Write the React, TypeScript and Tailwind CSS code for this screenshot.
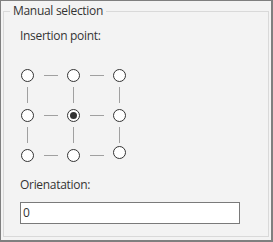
import React from "react"

const font = { fontFamily: '"Segoe UI", "Open Sans", "Noto Sans", sans-serif' }

function Radio({ checked = false, className = "" }: { checked?: boolean; className?: string }) {
  return (
    <div className={"flex h-[13px] w-[13px] items-center justify-center rounded-full border border-[#333333] bg-white " + className}>
      {checked && <div className="h-[7px] w-[7px] rounded-full bg-[#333333]" />}
    </div>
  )
}

const HLine = () => <div className="flex items-center justify-center"><div className="ml-px h-px w-[14px] bg-[#a0a0a0]" /></div>
const VLine = () => <div className="flex items-start justify-center pt-[5px]"><div className="h-[16px] w-px bg-[#a0a0a0]" /></div>
const Empty = () => <div />

export default function App() {
  return (
    <div className="h-[242px] w-[273px] border-b-2 border-l border-r-2 border-t border-[#7f7f7f] bg-[#f3f3f3] pl-[2px] pr-[2px] pt-[2px] text-[12px] tracking-[-0.3px] text-[#333333]" style={font}>
      <fieldset className="h-[234px] rounded-none border border-[#d9d9d9] px-0 pb-0 pt-0">
        <legend className="ml-[6px] px-[3px] leading-[16px] text-[#333333]">Manual selection</legend>
        <div className="pl-[16px] pt-[9px]">
          <div className="leading-[16px]">Insertion point:</div>
          <div className="ml-px mt-[25px] grid grid-cols-[13px_33px_13px_33px_13px] grid-rows-[13px_27px_13px_27px_13px]">
            <Radio /><HLine /><Radio /><HLine /><Radio />
            <VLine /><Empty /><VLine /><Empty /><VLine />
            <Radio /><HLine /><Radio checked /><HLine /><Radio />
            <VLine /><Empty /><VLine /><Empty /><VLine />
            <Radio /><HLine /><Radio /><HLine /><Radio className="-mt-[3px]" />
          </div>
          <div className="mt-[15px] leading-[16px]">Orienatation:</div>
          <div className="mt-[9px] flex h-[22px] w-[220px] items-center border border-[#7a7a7a] bg-white pl-[2px] leading-[16px]">0</div>
        </div>
      </fieldset>
    </div>
  )
}
